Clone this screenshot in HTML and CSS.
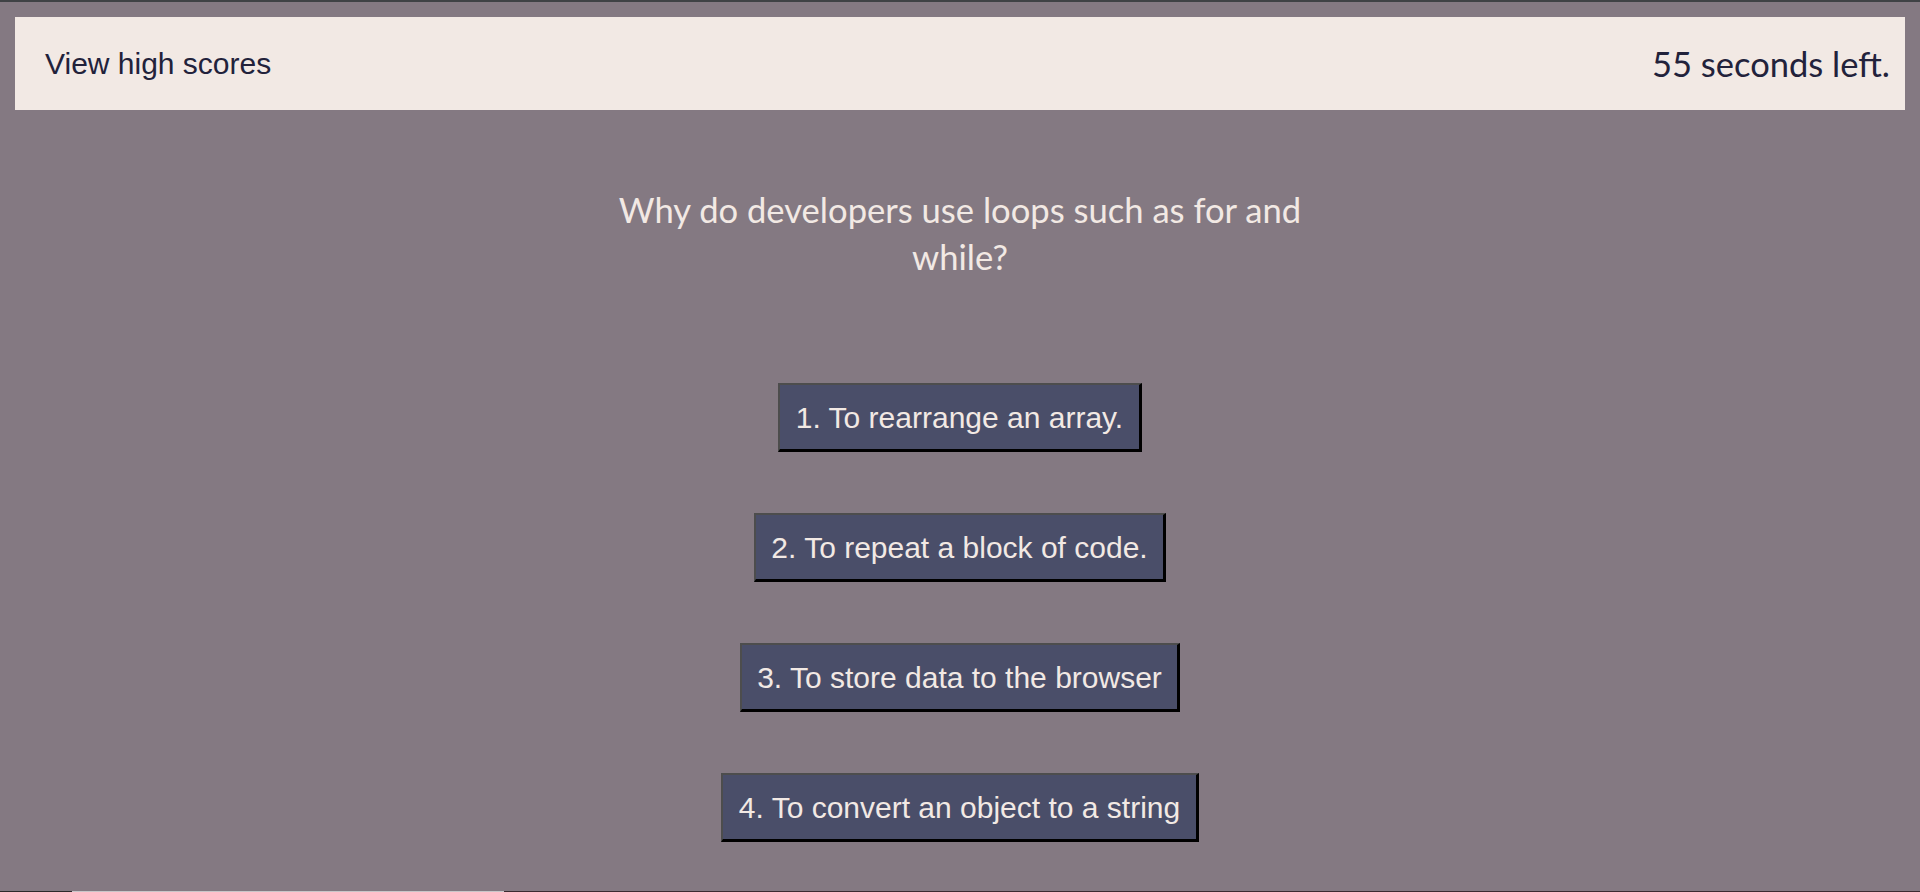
FILE: index.html
```html
<!DOCTYPE html>
<html lang="en">
<head>
<meta charset="utf-8">
<title>Code Quiz</title>
<link rel="stylesheet" href="styles.css">
</head>
<body>
<header class="topbar">
  <a class="scores-link">View high scores</a>
  <div class="timer">55 seconds left.</div>
</header>
<main class="quiz">
  <h2 class="question">Why do developers use loops such as for and while?</h2>
  <div class="choices">
    <button class="choice">1. To rearrange an array.</button>
    <button class="choice">2. To repeat a block of code.</button>
    <button class="choice">3. To store data to the browser</button>
    <button class="choice">4. To convert an object to a string</button>
  </div>
</main>
<div class="taskbar"><span class="tb-left"></span><span class="tb-mid"></span><span class="tb-right"></span></div>
</body>
</html>
```

FILE: styles.css
```css
html, body {
  height: 100%;
}
body {
  margin: 0;
  box-sizing: border-box;
  border-top: 2px solid #3f4245;
  background: #847982;
  overflow: hidden;
}
.topbar {
  margin: 15px 15px 0;
  height: 93px;
  box-sizing: border-box;
  padding: 0 15px 0 30px;
  background: #f2e9e4;
  display: flex;
  align-items: center;
  justify-content: space-between;
}
.scores-link {
  font-family: "Liberation Sans", Arial, sans-serif;
  font-size: 30px;
  color: #22223b;
}
.timer {
  font-family: Lato, "Open Sans", sans-serif;
  font-size: 34.5px;
  color: #22223b;
}
.quiz {
  display: flex;
  flex-direction: column;
  align-items: center;
}
.question {
  margin: 76px 0 0;
  width: 740px;
  text-align: center;
  font-family: Lato, "Open Sans", sans-serif;
  font-weight: 400;
  font-size: 34.6px;
  line-height: 47px;
  color: #f2e9e4;
}
.choices {
  margin-top: 103px;
  display: flex;
  flex-direction: column;
  align-items: center;
  gap: 61px;
}
.choice {
  font-family: "Liberation Sans", Arial, sans-serif;
  font-size: 30px;
  line-height: 34px;
  padding: 16px 15.5px 14px;
  border-style: solid;
  border-width: 2px 3px 3px 2px;
  border-color: #4d4d4d #000 #000 #4d4d4d;
  background: #4a4e69;
  color: #f2e9e4;
  margin: 0;
}
.taskbar {
  position: fixed;
  left: 0;
  right: 0;
  bottom: 0;
  height: 1px;
  display: flex;
}
.tb-left { width: 72px; background: #2e2a2c; }
.tb-mid { width: 432px; background: #c9c6c9; }
.tb-right { flex: 1; background: #3b2b31; }
```
